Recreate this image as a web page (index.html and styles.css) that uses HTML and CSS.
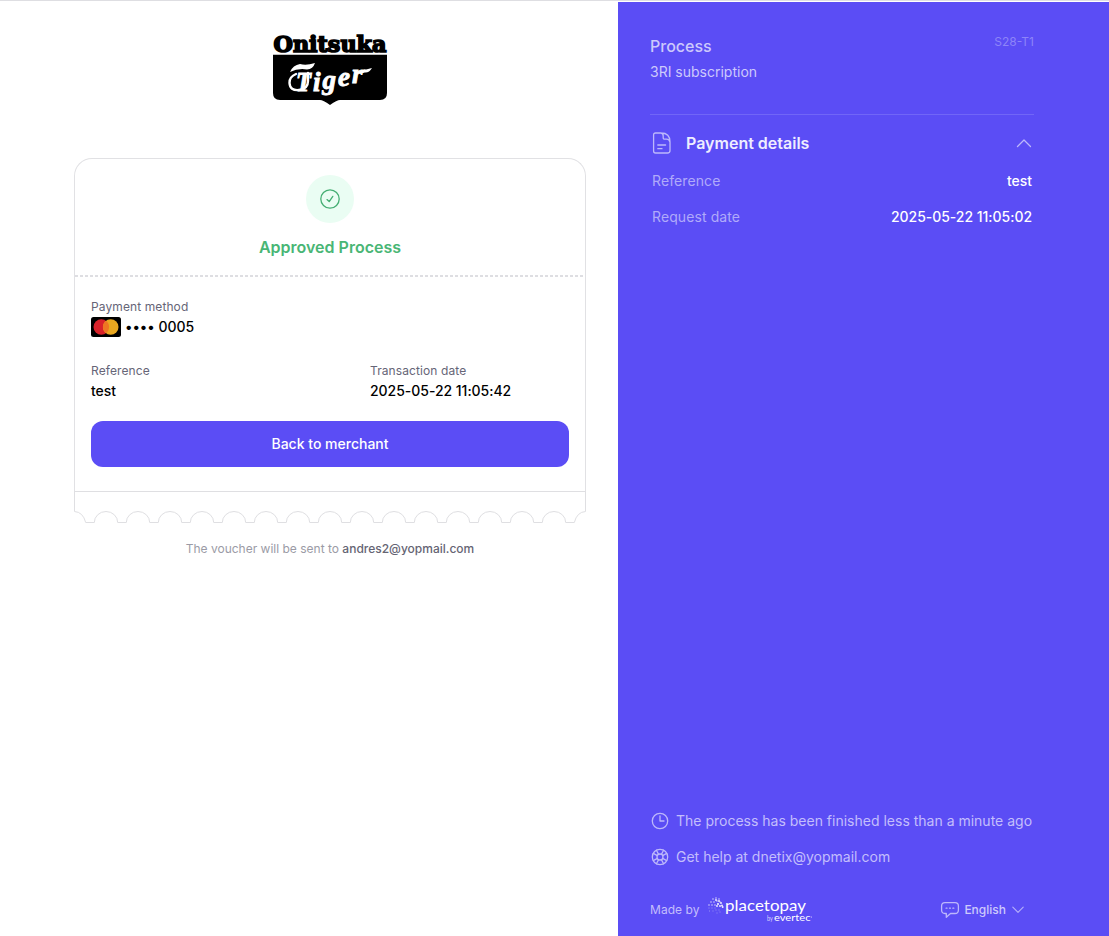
FILE: index.html
```html
<!DOCTYPE html>
<html lang="en">
<head>
<meta charset="utf-8">
<title>Approved Process</title>
<link rel="stylesheet" href="styles.css">
</head>
<body>
<div class="page">
  <main class="main">
    <svg class="brand" width="116" height="74" viewBox="0 0 116 74" role="img">
      <text class="brand-top" x="1.5" y="18.9" textLength="113" lengthAdjust="spacingAndGlyphs">Onitsuka</text>
      <path d="M1 21.7H115V60Q115 67 108 67H68Q65 67 58 72Q51 67 48 67H8Q1 67 1 60Z"/>
      <text class="brand-tiger" x="24" y="57.5" font-size="27" textLength="15" lengthAdjust="spacingAndGlyphs">T</text>
      <text class="brand-tiger" y="57" font-size="27"><tspan x="41" y="57.5">i</tspan><tspan x="50.5" y="55.5">g</tspan><tspan x="66" y="52.5">e</tspan><tspan x="80" y="49.5">r</tspan></text>
      <path class="brand-stroke" d="M24 41Q17 44 17.5 50Q18 58 27 57Q36 56 36 48V40"/>
      <path class="brand-flag" d="M18 39Q21 32 28 31Q34 33 43 30Q41 36 35 36.5Q26 35 18 39ZM87 41Q91 35 94 36.5L100 35Q97 40 93 39.5Z"/>
    </svg>

    <section class="ticket">
      <header class="status">
        <div class="status-icon">
          <svg width="20" height="20" viewBox="0 0 20 20"><circle cx="10" cy="10" r="9.2"/><path d="M7 10.6L9.2 12.6L12.8 7.4"/></svg>
        </div>
        <h1>Approved Process</h1>
      </header>
      <div class="details">
        <div class="field">
          <span class="label">Payment method</span>
          <span class="value card-value">
            <svg width="30" height="20" viewBox="0 0 30 20"><rect width="30" height="20" rx="2.5"/><circle cx="10.3" cy="10" r="7.8" fill="#d9222a"/><circle cx="19.7" cy="10" r="7.8" fill="#e9a820"/><path d="M15 3.8A7.8 7.8 0 0 1 15 16.2A7.8 7.8 0 0 1 15 3.8" fill="#ee7623"/></svg>
            <span>•••• 0005</span>
          </span>
        </div>
        <div class="field-row">
          <div class="field"><span class="label">Reference</span><span class="value">test</span></div>
          <div class="field"><span class="label">Transaction date</span><span class="value">2025-05-22 11:05:42</span></div>
        </div>
        <button class="back">Back to merchant</button>
      </div>
    </section>
    <svg class="scallop" width="512" height="33" viewBox="0 0 512 33">
      <path d="M.5 0V20.5Q9 21 11.7 31.5H20.3a11.7 11 0 0 1 23.4 0h8.6a11.7 11 0 0 1 23.4 0h8.6a11.7 11 0 0 1 23.4 0h8.6a11.7 11 0 0 1 23.4 0h8.6a11.7 11 0 0 1 23.4 0h8.6a11.7 11 0 0 1 23.4 0h8.6a11.7 11 0 0 1 23.4 0h8.6a11.7 11 0 0 1 23.4 0h8.6a11.7 11 0 0 1 23.4 0h8.6a11.7 11 0 0 1 23.4 0h8.6a11.7 11 0 0 1 23.4 0h8.6a11.7 11 0 0 1 23.4 0h8.6a11.7 11 0 0 1 23.4 0h8.6a11.7 11 0 0 1 23.4 0h8.6a11.7 11 0 0 1 23.4 0h8.6Q503 21 511.5 20.5V0M0 .5H512"/>
    </svg>
    <p class="voucher">The voucher will be sent to <strong>andres2@yopmail.com</strong></p>
  </main>

  <aside class="side">
    <header class="summary">
      <div><h2>Process</h2><p>3RI subscription</p></div>
      <span class="session">S28-T1</span>
    </header>
    <section class="payment">
      <div class="payment-head">
        <svg width="20" height="22" viewBox="0 0 20 22"><path d="M3.5 1H9Q18 1 18 10V18.5Q18 21 15.5 21H3.5Q1.6 21 1.6 19V3Q1.6 1 3.5 1ZM9 1Q11.2 1.5 11.2 4V5.7Q11.2 7.2 12.7 7.2H14.5Q17 7.2 18 10M5.8 13H13.6M5.8 16.7H10"/></svg>
        <h3>Payment details</h3>
        <svg class="chevron" width="16" height="10" viewBox="0 0 16 10"><path d="M1.5 8.5L8 2L14.5 8.5"/></svg>
      </div>
      <dl>
        <div><dt>Reference</dt><dd>test</dd></div>
        <div><dt>Request date</dt><dd>2025-05-22 11:05:02</dd></div>
      </dl>
    </section>
    <footer class="footer">
      <div class="note">
        <svg width="18" height="18" viewBox="0 0 18 18"><circle cx="9" cy="9" r="7.7"/><path d="M9 3.8V9H13"/></svg>
        <span>The process has been finished less than a minute ago</span>
      </div>
      <div class="note">
        <svg width="18" height="18" viewBox="0 0 18 18"><circle cx="9" cy="9" r="7.7"/><circle cx="9" cy="9" r="3"/><path d="M5.4 2.3L7.6 6.4M2.3 5.4L6.4 7.6M12.6 2.3L10.4 6.4M15.7 5.4L11.6 7.6M5.4 15.7L7.6 11.6M2.3 12.6L6.4 10.4M12.6 15.7L10.4 11.6M15.7 12.6L11.6 10.4"/></svg>
        <span>Get help at dnetix@yopmail.com</span>
      </div>
      <div class="bottom">
        <span>Made by</span>
        <svg class="ptp" width="108" height="28" viewBox="0 0 108 28">
          <g class="dots">
            <path d="M6 3h0M9 2h0M12 3h0M4 6h0M7 6h0M10 5h0M13 6h0M2 9h0M5 9h0M8 9h0M11 8h0"/>
            <path class="thick" d="M9 4h0M12 5h0M14 7h0M11 8h0M13 10h0M15 9.5h0M10 10h0M15.7 11h0"/>
            <path class="faint" d="M2 12h0M5 12h0M8 12h0M2.5 15h0M6 15h0M9 14h0M12 14h0M10 17h0M13 16h0"/>
          </g>
          <text class="ptp-name" x="18" y="14.7" textLength="81" lengthAdjust="spacingAndGlyphs">placetopay</text>
          <text class="ptp-by" x="60" y="25.2" textLength="6" lengthAdjust="spacingAndGlyphs">by</text>
          <text class="ptp-ev" x="67" y="25.2" textLength="36.5" lengthAdjust="spacingAndGlyphs">evertec</text>
          <circle cx="104.3" cy="21" r=".5" fill="#fff"/>
        </svg>
        <div class="lang">
          <svg width="20" height="18" viewBox="0 0 20 18"><path d="M5 1.6H15Q18.4 1.6 18.4 5V9Q18.4 12.5 15 12.5H10.5L6.3 16.2V12.5H5Q1.6 12.5 1.6 9V5Q1.6 1.6 5 1.6Z"/><path d="M6.1 7.2h.9M9.5 7.2h.9M12.9 7.2h.9"/></svg>
          <span>English</span>
          <svg class="down" width="12" height="8" viewBox="0 0 12 8"><path d="M.8 1.2L6 6.4L11.2 1.2"/></svg>
        </div>
      </div>
    </footer>
  </aside>
</div>
</body>
</html>
```
FILE: styles.css
```css
* { box-sizing: border-box; }
body { margin: 0; font-family: Inter, "Liberation Sans", sans-serif; background: #fff; }
h1, h2, h3, p, dl, dd { margin: 0; }
svg { display: block; flex: none; }
.page { display: grid; grid-template-columns: 618px 491px; height: 936px; border-top: 1px solid #dedee2; }

.main { padding: 32px 32px 0 74px; display: flex; flex-direction: column; }
.brand { margin: 0 auto; overflow: visible; }
.brand-top { font: 900 22px "DejaVu Serif", serif; stroke: #000; stroke-width: 1.6; }
.brand-tiger { font-family: "Liberation Serif", serif; font-weight: 700; font-style: italic; fill: #fff; stroke: #fff; stroke-width: .9; }
.brand-stroke { fill: none; stroke: #fff; stroke-width: 2.4; stroke-linecap: round; }
.brand-flag { fill: #fff; }

.ticket { margin-top: 51px; height: 333px; border: 1px solid #e1e1e4; border-bottom: 0; border-radius: 18px 18px 0 0; }
.status { height: 118px; padding-top: 16px; display: flex; flex-direction: column; align-items: center; background: repeating-linear-gradient(90deg, #dedee2 0 3px, transparent 3px 5px) 0 100% / 100% 2px no-repeat; }
.status-icon { width: 48px; height: 48px; border-radius: 50%; background: #eafdf3; display: grid; place-items: center; }
.status-icon svg { fill: none; stroke: #45ae73; stroke-width: 1.3; stroke-linecap: round; stroke-linejoin: round; }
h1 { margin-top: 12px; font-size: 16px; line-height: 24px; font-weight: 600; color: #49b675; }
.details { padding: 22px 16px 0; }
.field { display: flex; flex-direction: column; }
.label { font-size: 12px; line-height: 16px; letter-spacing: .1px; color: #666577; }
.value { font-size: 14px; line-height: 20px; margin-top: 2px; font-weight: 500; color: #000; letter-spacing: -.03px; }
.card-value { display: flex; gap: 4px; }
.field-row { display: grid; grid-template-columns: 279px 1fr; margin-top: 26px; }
.back { display: block; width: 100%; height: 46px; margin-top: 20px; padding: 0 0 2px; border: 0; border-radius: 12px; background: #5b4df5; color: #fff; font: 500 14px Inter, sans-serif; }
.scallop { fill: none; stroke: #dfdfe2; stroke-width: 1; }
.voucher { margin-top: 17px; text-align: center; font-size: 12px; line-height: 16px; color: #9b9ba6; }
.voucher strong { font-weight: 500; color: #656473; }

.side { margin-top: 1px; padding: 32px 75px 12px 32px; background: #5b4df5; color: #cdc9fc; display: flex; flex-direction: column; }
.side svg { fill: none; stroke: #bdb8fb; stroke-width: 1.3; stroke-linecap: round; stroke-linejoin: round; }
.summary { display: flex; justify-content: space-between; height: 81px; border-bottom: 1px solid #7166f7; }
h2 { font-size: 16px; line-height: 24px; font-weight: 500; color: #cdc9fc; }
.summary p { font-size: 14px; line-height: 20px; margin-top: 4px; }
.session { font-size: 12px; line-height: 16px; color: #8d84f8; }
.payment { padding: 16px 2px 0; }
.payment-head { display: flex; align-items: center; height: 24px; }
h3 { margin-left: 14px; font-size: 16px; font-weight: 600; line-height: 24px; color: #eeedff; }
.chevron { margin-left: auto; }
dl { margin-top: 16px; display: grid; gap: 16px; font-size: 14px; line-height: 20px; }
dl div { display: flex; justify-content: space-between; }
dt { color: #b0aafa; letter-spacing: .1px; }
dd { color: #fff; font-weight: 500; letter-spacing: -.03px; }
.footer { margin-top: auto; }
.note { display: flex; align-items: center; gap: 7px; height: 20px; margin: 0 0 16px 1px; font-size: 14px; white-space: nowrap; color: #c3befc; }
.note span { margin-bottom: 1px; }
.bottom { display: flex; align-items: center; height: 28px; margin-top: 29px; font-size: 12px; letter-spacing: .05px; color: #c3befc; }
.bottom > span, .lang span { margin-bottom: 2px; }
.side .ptp { margin-left: 7px; stroke: none; overflow: visible; }
.dots { stroke: #fff; stroke-width: 1.3; opacity: .9; }
.thick { stroke-width: 1.9; }
.faint { stroke-width: .8; opacity: .65; }
.ptp-name { font: 400 16px Lato, sans-serif; fill: #fff; }
.ptp-by { font: 400 7px Lato, sans-serif; fill: #dcd9ff; }
.ptp-ev { font: 400 9px Lato, sans-serif; fill: #fff; }
.lang { margin-left: auto; display: flex; align-items: center; gap: 4px; padding-right: 10px; font-weight: 500; letter-spacing: 0; color: #cdc9fc; }
.side .down { margin-left: 2px; stroke: #b5affa; stroke-width: 1.1; }
```
